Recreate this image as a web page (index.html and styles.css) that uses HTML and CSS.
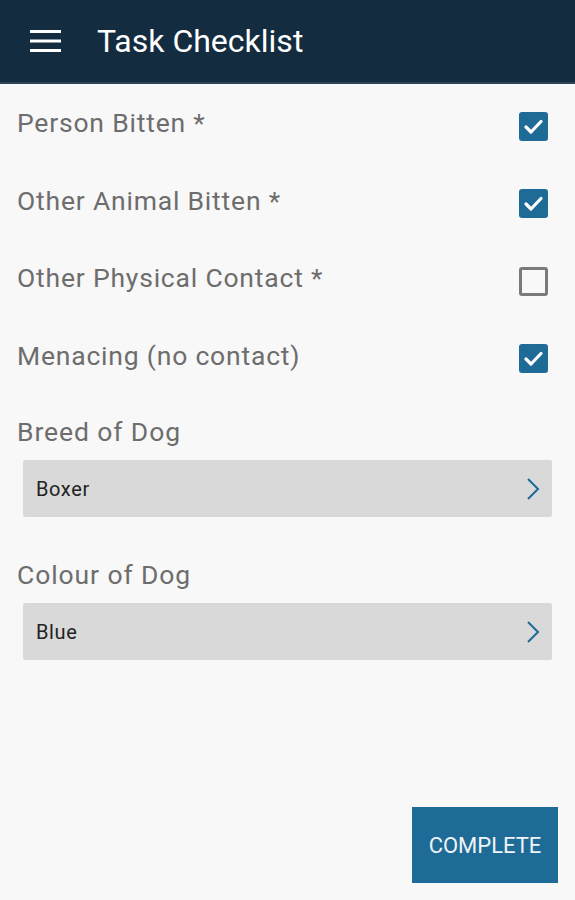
FILE: index.html
```html
<!DOCTYPE html>
<html>
<head>
<meta charset="utf-8">
<link rel="stylesheet" href="styles.css">
</head>
<body>
<div class="app">
  <header class="topbar">
    <svg class="menu-icon" width="32" height="24" viewBox="0 0 32 24"><rect x="0" y="1" width="31" height="3" fill="#fff"/><rect x="0" y="10.5" width="31" height="3" fill="#fff"/><rect x="0" y="20" width="31" height="3" fill="#fff"/></svg>
    <h1 class="title">Task Checklist</h1>
  </header>
  <main class="content">
    <div class="check-row"><span class="check-label">Person Bitten *</span><span class="box checked"><svg viewBox="0 0 29 29" width="29" height="29"><path d="M7 15 L12 20 L22 9.5" fill="none" stroke="#fff" stroke-width="3.2" stroke-linecap="round" stroke-linejoin="round"/></svg></span></div>
    <div class="check-row"><span class="check-label">Other Animal Bitten *</span><span class="box checked"><svg viewBox="0 0 29 29" width="29" height="29"><path d="M7 15 L12 20 L22 9.5" fill="none" stroke="#fff" stroke-width="3.2" stroke-linecap="round" stroke-linejoin="round"/></svg></span></div>
    <div class="check-row"><span class="check-label">Other Physical Contact *</span><span class="box"></span></div>
    <div class="check-row"><span class="check-label">Menacing (no contact)</span><span class="box checked"><svg viewBox="0 0 29 29" width="29" height="29"><path d="M7 15 L12 20 L22 9.5" fill="none" stroke="#fff" stroke-width="3.2" stroke-linecap="round" stroke-linejoin="round"/></svg></span></div>

    <section class="field first">
      <div class="field-label">Breed of Dog</div>
      <div class="select"><span class="select-value">Boxer</span><svg class="chev" width="14" height="24" viewBox="0 0 14 24"><path d="M2 2 L12 12 L2 22" fill="none" stroke="#1f6b97" stroke-width="2"/></svg></div>
    </section>
    <section class="field">
      <div class="field-label">Colour of Dog</div>
      <div class="select"><span class="select-value">Blue</span><svg class="chev" width="14" height="24" viewBox="0 0 14 24"><path d="M2 2 L12 12 L2 22" fill="none" stroke="#1f6b97" stroke-width="2"/></svg></div>
    </section>
  </main>
  <footer class="actions">
    <button class="complete">COMPLETE</button>
  </footer>
</div>
</body>
</html>
```

FILE: styles.css
```css
html, body {
  margin: 0;
  padding: 0;
  background: #f8f8f8;
}
body {
  font-family: Roboto, "Liberation Sans", sans-serif;
}
.app {
  width: 575px;
  height: 900px;
  display: flex;
  flex-direction: column;
  background: #f8f8f8;
}
.topbar {
  height: 82px;
  background: #132c40;
  border-bottom: 2px solid #2f4556;
  display: flex;
  align-items: center;
  padding-left: 30px;
  box-sizing: content-box;
}
.menu-icon {
  display: block;
}
.title {
  margin: 0 0 0 35px;
  font-size: 32px;
  font-weight: 400;
  color: #ffffff;
}
.content {
  flex: 1;
  display: flex;
  flex-direction: column;
}
.check-row {
  height: 77.5px;
  display: flex;
  align-items: center;
  justify-content: space-between;
  padding: 0 27px 0 17px;
}
.check-label {
  font-size: 26.5px;
  letter-spacing: 0.8px;
  color: #6d6d6d;
}
.box {
  width: 29px;
  height: 29px;
  box-sizing: border-box;
  border: 3px solid #7a7a7a;
  border-radius: 3px;
  margin-top: 7px;
}
.box.checked {
  border: none;
  background: #1f6b97;
}
.box svg {
  display: block;
}
.field {
  display: flex;
  flex-direction: column;
  padding: 0 23px 0 17px;
  margin-top: 43px;
}
.field.first {
  margin-top: 23px;
}
.field-label {
  font-size: 26.5px;
  letter-spacing: 0.9px;
  line-height: 30px;
  color: #6d6d6d;
  margin-bottom: 13px;
}
.select {
  margin-left: 6px;
  height: 57px;
  background: #d8d9d8;
  border-radius: 2px;
  display: flex;
  align-items: center;
  justify-content: space-between;
  padding: 0 12px 0 13px;
}
.select-value {
  font-size: 20px;
  letter-spacing: 0.6px;
  color: #222;
}
.chev {
  display: block;
}
.actions {
  display: flex;
  justify-content: flex-end;
  padding: 0 17px 17px 0;
}
.complete {
  width: 146px;
  height: 76px;
  border: none;
  background: #1f6b97;
  color: #eef4f8;
  font-family: Roboto, "Liberation Sans", sans-serif;
  font-size: 22px;
  padding: 0;
  border-radius: 0;
}
```
